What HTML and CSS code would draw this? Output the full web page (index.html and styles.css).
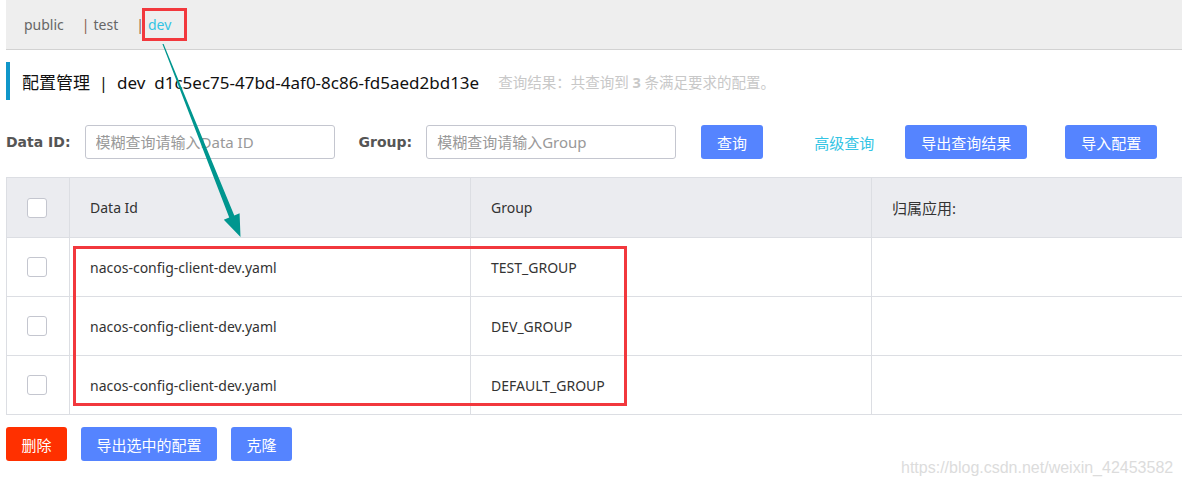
FILE: index.html
```html
<!DOCTYPE html>
<html lang="zh">
<head>
<meta charset="utf-8">
<title>配置管理</title>
<link rel="stylesheet" href="styles.css">
</head>
<body>
<div class="page">
  <div class="ns-bar">
    <span class="ns-item">public</span>
    <span class="ns-sep">|</span><span class="ns-item">test</span>
    <span class="ns-sep">|</span><span class="ns-item ns-active">dev</span>
  </div>

  <div class="title-row">
    <h1 class="title">配置管理 &nbsp;|&nbsp; dev &nbsp;d1c5ec75-47bd-4af0-8c86-fd5aed2bd13e</h1>
    <span class="result">查询结果：共查询到 <b>3</b> 条满足要求的配置。</span>
  </div>

  <div class="search-row">
    <label class="lbl">Data ID:</label>
    <input class="inp" type="text" placeholder="模糊查询请输入Data ID">
    <label class="lbl lbl-group">Group:</label>
    <input class="inp" type="text" placeholder="模糊查询请输入Group">
    <button class="btn btn-query">查询</button>
    <a class="link-adv">高级查询</a>
    <button class="btn btn-export">导出查询结果</button>
    <button class="btn btn-import">导入配置</button>
  </div>

  <table class="cfg-table">
    <thead>
      <tr>
        <th class="c-chk"><span class="chk"></span></th>
        <th class="c-id">Data Id</th>
        <th class="c-group">Group</th>
        <th class="c-app">归属应用:</th>
      </tr>
    </thead>
    <tbody>
      <tr>
        <td class="c-chk"><span class="chk"></span></td>
        <td>nacos-config-client-dev.yaml</td>
        <td>TEST_GROUP</td>
        <td></td>
      </tr>
      <tr>
        <td class="c-chk"><span class="chk"></span></td>
        <td>nacos-config-client-dev.yaml</td>
        <td>DEV_GROUP</td>
        <td></td>
      </tr>
      <tr>
        <td class="c-chk"><span class="chk"></span></td>
        <td>nacos-config-client-dev.yaml</td>
        <td>DEFAULT_GROUP</td>
        <td></td>
      </tr>
    </tbody>
  </table>

  <div class="footer-btns">
    <button class="btn btn-danger">删除</button>
    <button class="btn btn-export-sel">导出选中的配置</button>
    <button class="btn btn-clone">克隆</button>
  </div>

  <div class="watermark">https://blog.csdn.net/weixin_42453582</div>

  <svg class="annot" width="1182" height="487" viewBox="0 0 1182 487">
    <rect x="143.5" y="9.5" width="42" height="30" fill="none" stroke="#f2383d" stroke-width="3"/>
    <rect x="74.5" y="247.5" width="551" height="157" fill="none" stroke="#f2383d" stroke-width="3"/>
    <polygon points="163.6,44 234.3,215.4 239.6,213.2 240.5,237 223.8,219.8 229.2,217.6 162.4,44" fill="#00968f"/>
  </svg>
</div>
</body>
</html>
```

FILE: styles.css
```css
* { box-sizing: border-box; }

html, body {
  margin: 0;
  padding: 0;
  background: #fff;
  overflow: hidden;
}

body {
  font-family: "Noto Sans", "Noto Sans CJK SC", sans-serif;
  font-size: 14px;
  color: #333;
}

.page {
  position: relative;
  width: 1182px;
  height: 487px;
  padding-left: 6px;
}

/* namespace bar */
.ns-bar {
  height: 50px;
  background: #eeeeee;
  border-bottom: 1px solid #d2d2d2;
  display: flex;
  align-items: center;
  padding-left: 18px;
  font-size: 14px;
  color: #666;
}
.ns-item { color: #666; }
.ns-sep {
  color: #8a5f4f;
  margin-left: 18px;
  margin-right: 4px;
}
.ns-active { color: #33c4e4; }

/* title */
.title-row {
  margin-top: 12px;
  height: 38px;
  border-left: 4px solid #1096c9;
  display: flex;
  align-items: center;
  padding-left: 12px;
}
.title {
  margin: 0;
  font-size: 17px;
  font-weight: normal;
  color: #111;
  white-space: nowrap;
}
.result {
  margin-left: 19px;
  font-size: 14.5px;
  color: #c8c8c8;
  white-space: nowrap;
}
.result b { font-weight: bold; }

/* search */
.search-row {
  margin-top: 25px;
  height: 34px;
  display: flex;
  align-items: center;
}
.lbl {
  font-family: "DejaVu Sans", "Noto Sans", sans-serif;
  font-weight: bold;
  color: #555;
  font-size: 14px;
  margin-right: 14px;
}
.lbl-group { margin-left: 24px; margin-right: 14px; }
.inp {
  width: 250px;
  height: 34px;
  border: 1px solid #c4c6cf;
  border-radius: 3px;
  padding: 0 10px;
  font-family: inherit;
  font-size: 15px;
  color: #333;
  outline: none;
}
.inp::placeholder { color: #999; }

.btn {
  height: 34px;
  border: none;
  border-radius: 3px;
  background: #5584ff;
  color: #fff;
  font-family: inherit;
  font-size: 15px;
  padding: 0;
  cursor: pointer;
}
.btn-query { width: 62px; margin-left: 25px; }
.link-adv {
  color: #33c4e4;
  margin-left: 51px;
  font-size: 15px;
}
.btn-export { width: 122px; margin-left: 31px; }
.btn-import { width: 92px; margin-left: 38px; }

/* table */
.cfg-table {
  margin-top: 18px;
  border-collapse: collapse;
  width: 1190px;
  table-layout: fixed;
}
.cfg-table th,
.cfg-table td {
  border: 1px solid #dcdee3;
  height: 59px;
  padding: 0 0 0 20px;
  text-align: left;
  font-weight: normal;
  font-size: 14px;
  color: #333;
}
.cfg-table thead th {
  background: #ebecf0;
  height: 60px;
}
.cfg-table .c-app { font-size: 15px; }
.cfg-table .c-chk { width: 63px; padding: 0 0 0 20px; }
.cfg-table .c-id { width: 401px; }
.cfg-table .c-group { width: 401px; }

.chk {
  display: block;
  width: 20px;
  height: 20px;
  border: 1px solid #c4c6cf;
  border-radius: 3px;
  background: #fff;
}

/* footer */
.footer-btns {
  margin-top: 12px;
  display: flex;
  gap: 14px;
}
.btn-danger { background: #ff3000; width: 61px; }
.btn-export-sel { width: 136px; }
.btn-clone { width: 61px; }

.watermark {
  position: absolute;
  left: 901px;
  top: 459px;
  font-family: "Liberation Sans", Arial, sans-serif;
  font-size: 16px;
  color: #dcdcdc;
  white-space: nowrap;
}

.annot {
  position: absolute;
  left: 0;
  top: 0;
  pointer-events: none;
}
```
